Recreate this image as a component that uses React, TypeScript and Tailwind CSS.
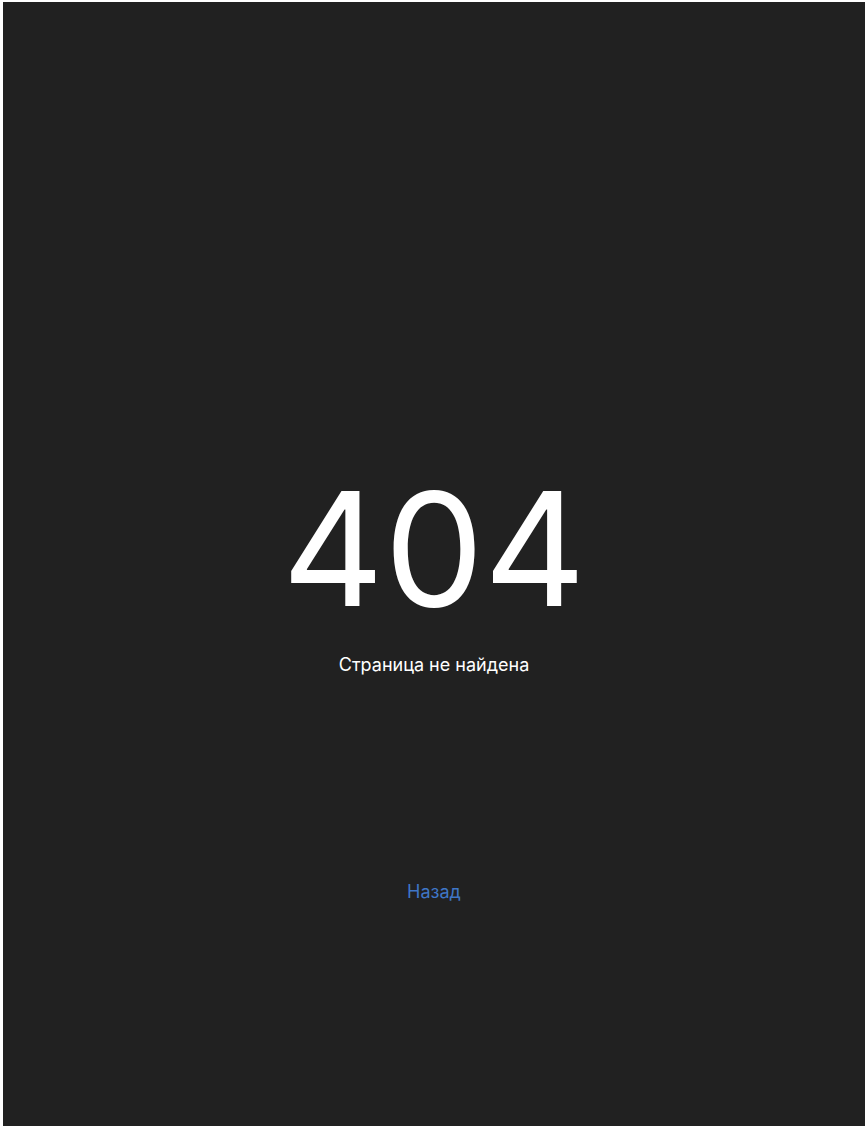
import React from "react";

export default function App() {
  return (
    <div className="min-h-screen bg-white pt-[2px] pl-[3px]">
      <main
        className="h-[1124px] bg-[#212121] flex flex-col items-center text-white"
        style={{ fontFamily: "Inter, 'Noto Sans', sans-serif" }}
      >
        <h1 className="mt-[468px] text-[158px] leading-none font-normal">404</h1>
        <p className="mt-[23px] text-lg leading-7">Страница не найдена</p>
        <a href="/" className="mt-[199px] text-lg leading-7 text-[#3f76c6]">
          Назад
        </a>
      </main>
    </div>
  );
}
